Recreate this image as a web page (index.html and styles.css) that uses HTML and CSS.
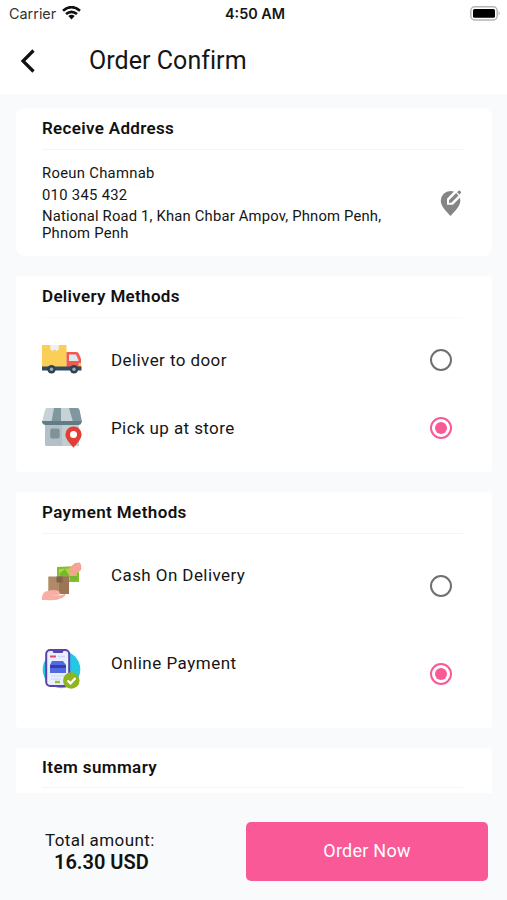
FILE: index.html
```html
<!DOCTYPE html>
<html lang="en">
<head>
<meta charset="utf-8">
<meta name="viewport" content="width=device-width, initial-scale=1">
<title>Order Confirm</title>
<link rel="stylesheet" href="styles.css">
</head>
<body>
<div class="screen">
  <div class="status">
    <div class="carrier"><span class="t-carrier">Carrier</span>
      <svg width="19" height="14" viewBox="0 0 19 14"><g fill="none" stroke="#111" stroke-width="2.7"><path d="M1 4.7Q9.500-2.300 18 4.700"/><path d="M4 8Q9.500 3.600 15 8"/></g><path d="M6.300 10Q9.500 7.700 12.700 10L9.500 13.400Z" fill="#111"/></svg>
    </div>
    <span class="time">4:50 AM</span>
    <svg class="battery" width="31" height="15" viewBox="0 0 31 15"><rect x=".8" y=".8" width="26.400" height="13.200" rx="4" fill="#fff" stroke="#b5b5b5" stroke-width="1.500"/><rect x="3" y="3" width="22" height="8.800" rx="1.500" fill="#000"/><path d="M28.600 5Q31 7.400 28.600 9.800Z" fill="#b5b5b5"/></svg>
  </div>
  <header class="header">
    <svg width="16" height="24" viewBox="0 0 16 24"><path d="M13.500 1.500L3 12L13.500 22.500" fill="none" stroke="#111" stroke-width="3.200"/></svg>
    <h1><span class="t-title">Order Confirm</span></h1>
  </header>
  <main class="content">
    <section class="card card-address">
      <h2><span class="t-receive">Receive Address</span></h2>
      <div class="address">
        <div class="lines">
          <p><span class="t-name">Roeun Chamnab</span></p>
          <p><span class="t-phone">010 345 432</span></p>
          <p class="street"><span class="t-street">National Road 1, Khan Chbar Ampov, Phnom Penh,</span><br><span class="t-city">Phnom Penh</span></p>
        </div>
        <svg class="edit" width="22" height="28" viewBox="0 0 22 28"><path d="M10.500 27C5.500 21.500.8 17 .8 11.700A9.700 9.700 0 0 1 10.500 2Q12.500 2 14 2.600L7 9.700V15.700H13L19.800 8.800Q20.300 10.200 20.300 11.700C20.300 17 15.500 21.500 10.500 27Z" fill="#858585"/><path d="M9 11.300L16.200 4.100L18.500 6.400L11.300 13.700H9ZM17 3.300L18.500 1.800Q19.200 1.100 19.900 1.800L20.900 2.800Q21.500 3.500 20.900 4.100L19.400 5.600Z" fill="#858585"/></svg>
      </div>
    </section>

    <section class="card card-delivery">
      <h2><span class="t-delivery">Delivery Methods</span></h2>
      <div class="option">
        <svg width="42" height="42" viewBox="0 0 42 42"><path d="M1 6H25.500V28H1Z" fill="#fbce57"/><path d="M9.300 6H17.700V10.500L15.700 12L13.500 10.500L11.300 12L9.300 10.500Z" fill="#f5eef0"/><path d="M25.500 13H35.500Q37 13 37.800 14.500L40 20V30H25.500Z" fill="#ee5b50"/><path d="M28 15.500H35L37.500 21V22H28Z" fill="#dce8f2"/><path d="M1 27.500H40.500V31.500H1Z" fill="#344a61"/><path d="M37.500 24H40V27H37.500Z" fill="#fbc856"/><g fill="#304252"><circle cx="10.500" cy="30.300" r="4.200"/><circle cx="33" cy="30.300" r="4.200"/></g><g fill="#9aaebd"><circle cx="10.500" cy="30.300" r="1.700"/><circle cx="33" cy="30.300" r="1.700"/></g></svg>
        <span class="label"><span class="t-door">Deliver to door</span></span>
        <span class="radio"></span>
      </div>
      <div class="option">
        <svg width="42" height="42" viewBox="0 0 42 42"><path d="M4 16H38V39H6Q4 39 4 37Z" fill="#c2cdd1"/><path d="M4 16H21V39H6Q4 39 4 37Z" fill="#b3c0c5"/><path d="M5 1H36Q38 1 38.500 3L41 15H1L4 3Z" fill="#c6d2d6"/><path d="M13 1H20V15H10.500ZM28 1H36Q38 1 38.500 3L41 15H32Z" fill="#81979f"/><path d="M1 14H40.500V15.500Q40 18 37 18H5Q1 18 1 14Z" fill="#607d85"/><rect x="9.200" y="21.500" width="9.500" height="10" rx="2" fill="#809198"/><path d="M32.500 40.700C29 36.500 24.400 32 24.400 27.500A8.100 8.100 0 0 1 40.600 27.500C40.600 32 36 36.500 32.500 40.700Z" fill="#e43d36"/><circle cx="32.500" cy="27.500" r="3.500" fill="#fff"/></svg>
        <span class="label"><span class="t-pickup">Pick up at store</span></span>
        <span class="radio checked"></span>
      </div>
    </section>

    <section class="card card-payment">
      <h2><span class="t-payment">Payment Methods</span></h2>
      <div class="option pay">
        <svg width="42" height="42" viewBox="0 0 42 42"><path d="M16 7L38 6V22H16Z" fill="#83bc2d"/><path d="M18 9L36 8V20H18Z" fill="#a8d83d"/><path d="M18 14L24 9L29 17L23 21ZM29 16H36V20H29Z" fill="#78b82e"/><path d="M27 9L34 3L39 2.500Q41 7 40 10Q36 14 31 16Q27 16 30 11Z" fill="#f7a394"/><path d="M7.300 16.500H28V34H7.300Z" fill="#af8968"/><path d="M18 16.500H28V34H18Z" fill="#9c7554"/><path d="M15.500 16.500H21.500V22.500H15.500Z" fill="#7f624b"/><path d="M1 37Q2 31 7 31Q12 29 18 31L19 34Q15 37 10 34Q12 37 20 35L24 34Q26 35 21 38Q15 41 6 40L1 40Z" fill="#f7aea3"/></svg>
        <span class="label"><span class="t-cash">Cash On Delivery</span></span>
        <span class="radio"></span>
      </div>
      <div class="option pay">
        <svg width="42" height="42" viewBox="0 0 42 42"><circle cx="20.500" cy="21.500" r="18.800" fill="#25c7e5"/><rect x="5.200" y="2" width="23" height="36" rx="4" fill="#e9efff" stroke="#5944aa" stroke-width="2"/><path d="M11 2H23L21.500 5H12.500Z" fill="#5944aa"/><path d="M9 8.500H15" stroke="#e34b76" stroke-width="2"/><path d="M17 8.500H24" stroke="#cdd5ef" stroke-width="1.500"/><path d="M11 13H22L25 17V25H9V17Z" fill="#506ce4"/><path d="M9 17H25V20H9Z" fill="#4239a8"/><path d="M10 28H24M10 31H20" stroke="#d0d8f3" stroke-width="1.200"/><path d="M14 34H19" stroke="#a1bd2c" stroke-width="2.400"/><circle cx="30.300" cy="32.500" r="8.300" fill="#8eb51e"/><path d="M26.500 32.500L29.500 35.300L34.500 30" fill="none" stroke="#fff" stroke-width="2.300"/></svg>
        <span class="label"><span class="t-online">Online Payment</span></span>
        <span class="radio checked"></span>
      </div>
    </section>

    <section class="card card-items">
      <h2><span class="t-items">Item summary</span></h2>
    </section>
  </main>
  <footer class="footer">
    <div class="total">
      <div><span class="t-total">Total amount:</span></div>
      <div class="amount"><span class="t-amount">16.30 USD</span></div>
    </div>
    <button class="order"><span class="t-order">Order Now</span></button>
  </footer>
</div>
</body>
</html>
```
FILE: styles.css
```css
* { box-sizing: border-box; }
body { margin: 0; font-family: Roboto, "Liberation Sans", sans-serif; color: #151515; background: #f8fafc; }
h1, h2, p { margin: 0; }
svg { display: block; flex: none; }
span { white-space: nowrap; }
.screen { width: 507px; height: 900px; display: flex; flex-direction: column; overflow: hidden; }
.status { height: 28px; background: #fff; display: grid; grid-template-columns: 1fr auto 1fr; align-items: center; padding: 0 6px 2px 9px; font-size: 14.4px; font-family: Inter, sans-serif; }
.carrier { display: flex; align-items: center; gap: 6px; color: #333; }
.time { font-weight: 600; }
.battery { justify-self: end; }
.header { height: 66px; background: #fff; display: flex; align-items: center; padding: 0 20px 1px 20px; gap: 53px; }
.header h1 { font-size: 25px; line-height: 30px; font-weight: 400; }
.content { height: 699px; padding: 14px 15px 0 16px; display: flex; flex-direction: column; gap: 20px; overflow: hidden; }
.card { flex: none; background: #fff; border-radius: 4px; padding: 0 29px 0 26px; }
.card h2 { height: 42px; padding-top: 9px; font-size: 17px; line-height: 22px; font-weight: 600; border-bottom: 1px solid #f2f4f5; color: #111; }
.card-address { height: 148px; border-radius: 9px; }
.card-delivery { height: 196px; }
.card-delivery h2 { border-color: #f9fafb; }
.card-payment { height: 236px; }
.card-items { height: 60px; }
.card-items h2 { height: 40px; padding-top: 8px; }
.address { display: flex; justify-content: space-between; align-items: center; height: 106px; }
.lines { font-size: 14.8px; line-height: 18px; }
.lines p + p { margin-top: 4px; }
.lines .street { line-height: 17px; }
.edit { margin-right: 1px; }
.option { display: flex; align-items: center; height: 68px; padding-right: 11px; }
.option svg { margin-left: -1px; }
.card-delivery h2 + .option { margin-top: 8px; }
.label { flex: 1; padding-left: 28px; font-size: 17px; line-height: 22px; }
.option.pay { height: 88px; }
.card-payment h2 + .option { margin-top: 3px; }
.pay .label { padding-bottom: 12px; }
.pay .radio { margin-top: 10px; }
.radio { width: 22px; height: 22px; flex: none; border: 2.5px solid #707070; border-radius: 50%; display: grid; place-items: center; }
.radio.checked { border-color: #f95997; }
.radio.checked::after { content: ""; width: 12px; height: 12px; border-radius: 50%; background: #f95997; }
.footer { height: 107px; display: flex; align-items: center; justify-content: space-between; padding: 9px 19px 0 45px; }
.total { font-size: 17px; line-height: 22px; padding-bottom: 1px; }
.amount { padding-left: 9px; font-size: 20px; line-height: 22px; font-weight: 600; color: #111; }
.order { width: 242px; height: 59px; border: 0; border-radius: 5px; background: #f95997; color: #fff; font: 400 18px/22px Roboto, sans-serif; }
.t-title { letter-spacing: .05px; }
.t-receive, .t-delivery { letter-spacing: .32px; }
.t-payment, .t-items { letter-spacing: .4px; }
.t-name, .t-phone { letter-spacing: .3px; }
.t-street { letter-spacing: .18px; }
.t-city { letter-spacing: .25px; }
.t-door { letter-spacing: .42px; }
.t-pickup { letter-spacing: .4px; }
.t-cash { letter-spacing: .42px; }
.t-online { letter-spacing: .5px; }
.t-total { letter-spacing: .4px; }
.t-order { letter-spacing: .25px; }
```
